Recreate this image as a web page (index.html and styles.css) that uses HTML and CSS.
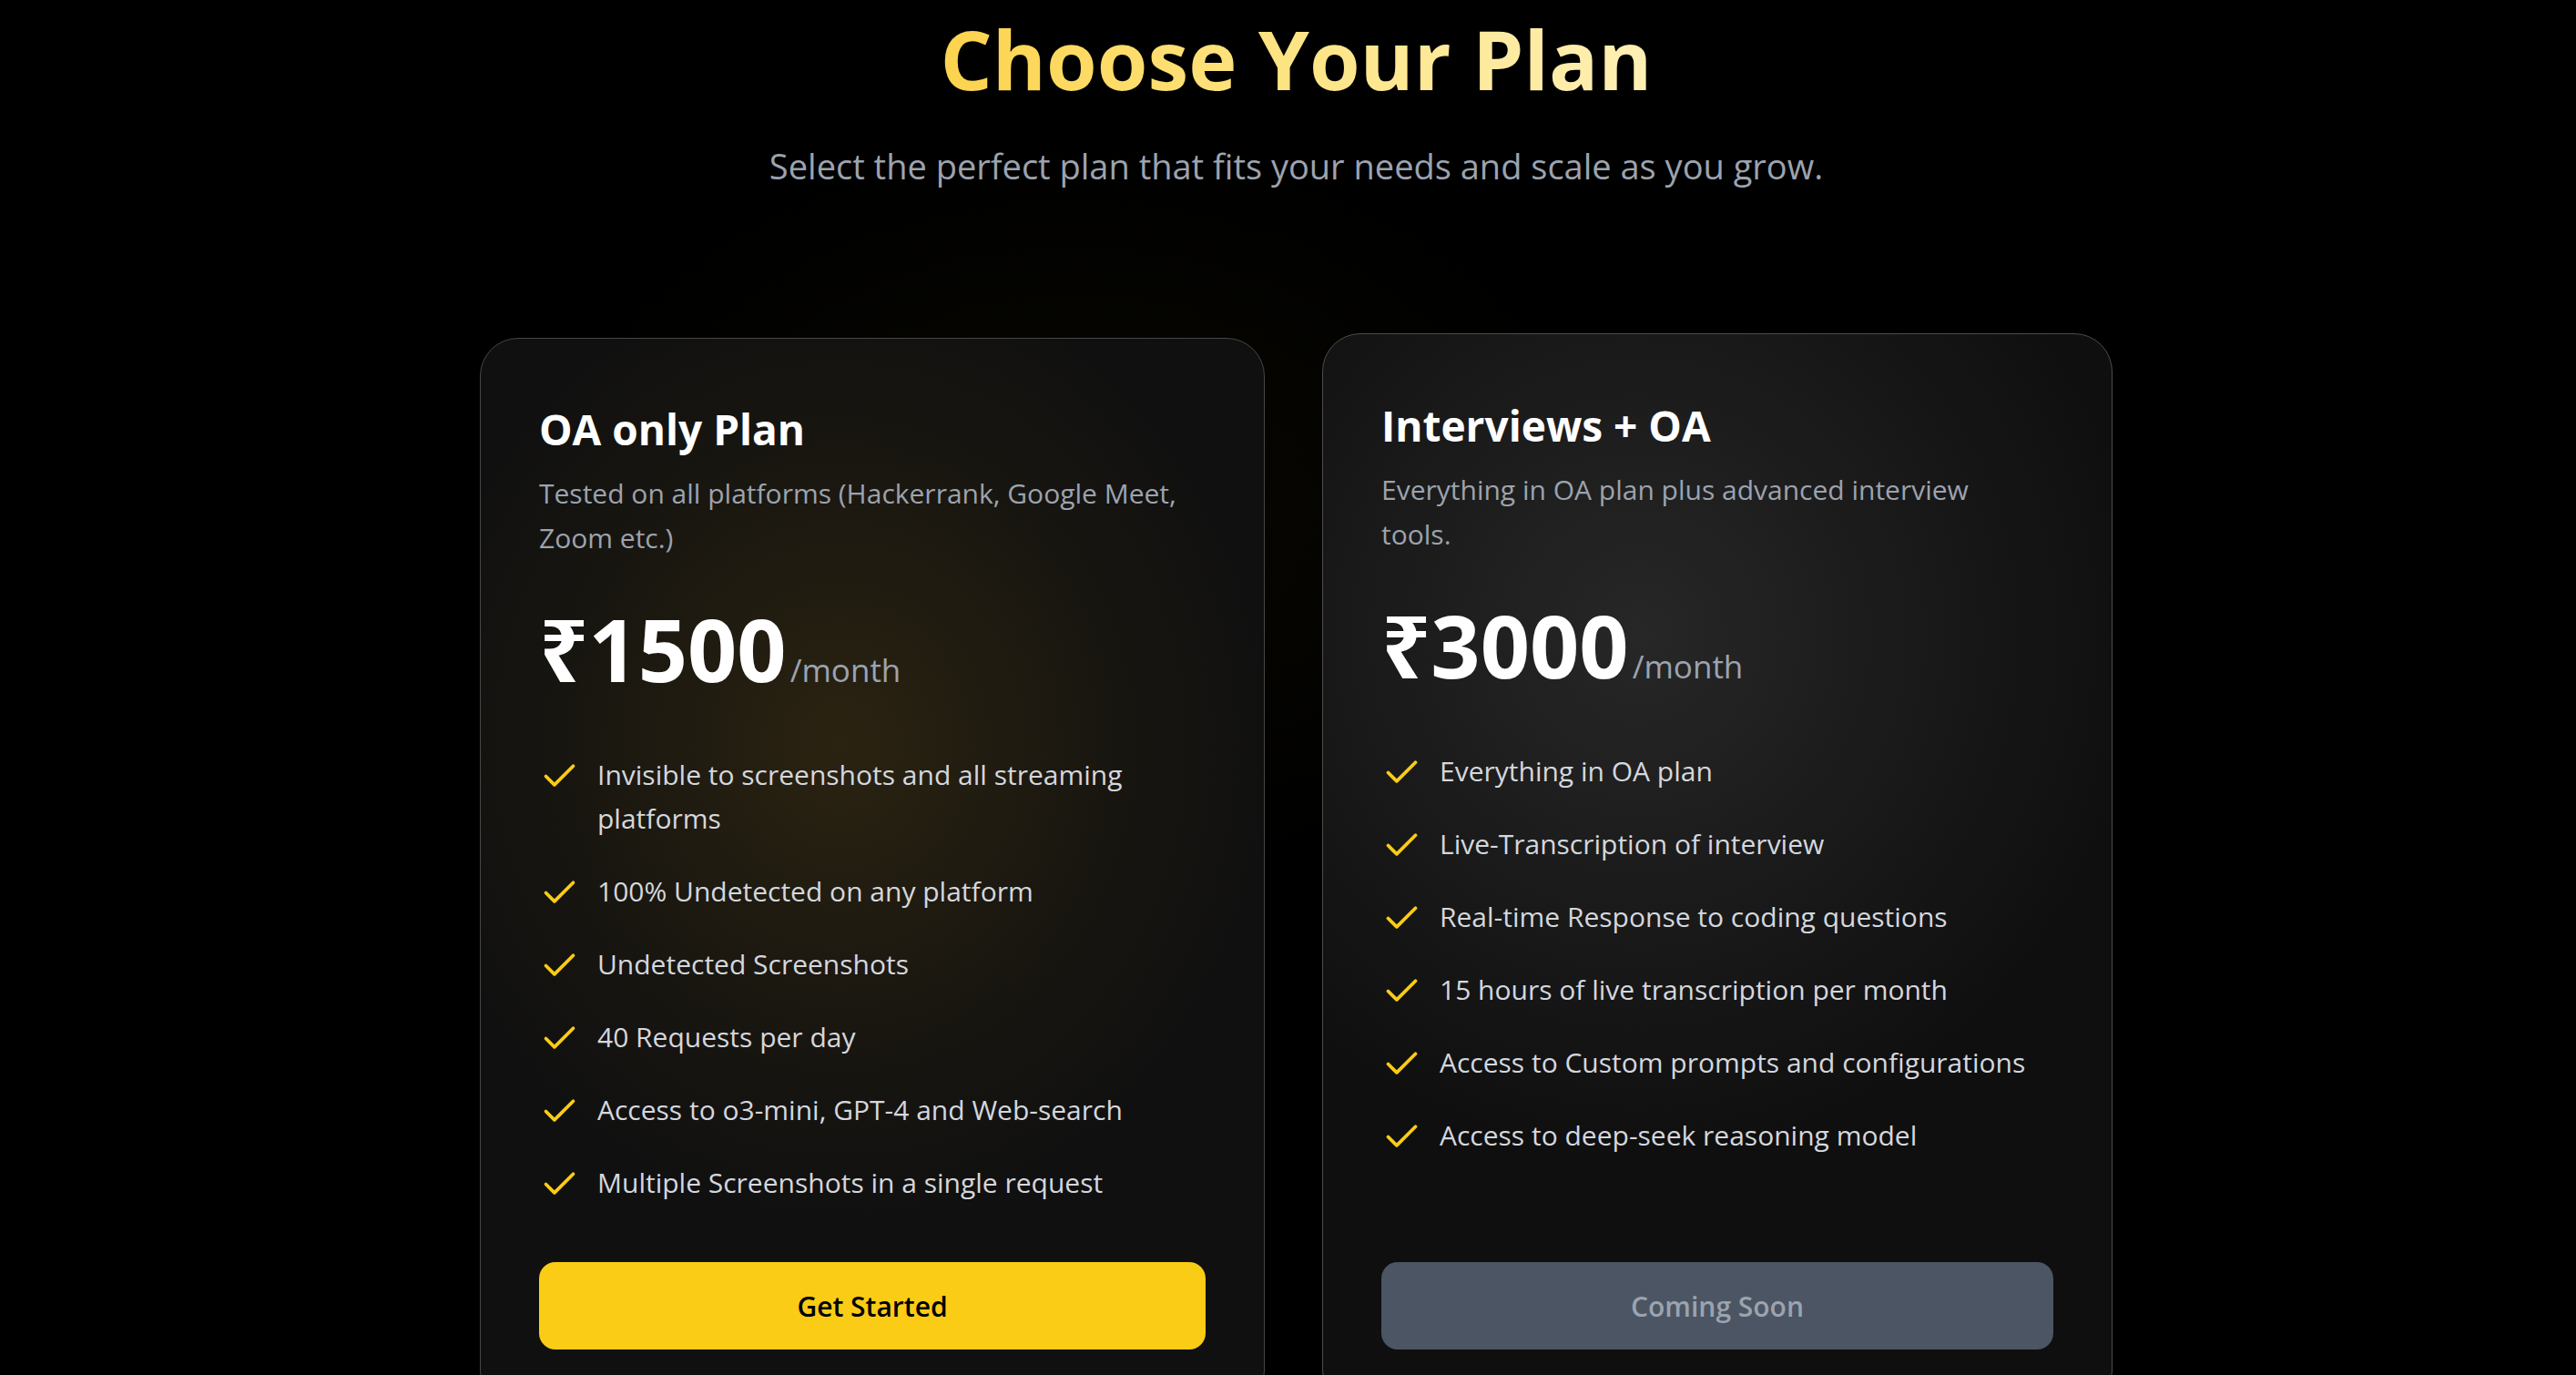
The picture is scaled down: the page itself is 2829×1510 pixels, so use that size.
FILE: index.html
```html
<!DOCTYPE html>
<html lang="en">
<head>
    <meta charset="UTF-8">
    <meta name="viewport" content="width=device-width, initial-scale=1.0">
    <title>Pricing</title>
    <link rel="stylesheet" href="styles.css">
</head>
<body>
    <main class="pricing">
        <header class="pricing-head">
            <h1>Choose Your Plan</h1>
            <p class="subtitle">Select the perfect plan that fits your needs and scale as you grow.</p>
        </header>

        <div class="plans">
            <!-- OA plan -->
            <article class="plan plan--oa">
                <h2 class="plan-name">OA only Plan</h2>
                <p class="plan-desc">Tested on all platforms (Hackerrank, Google Meet, Zoom etc.)</p>
                <div class="price">
                    <span class="amount">₹1500</span>
                    <span class="per">/month</span>
                </div>
                <ul class="features">
                    <li><svg viewBox="0 0 24 24"><path d="M20 6 9 17l-5-5"/></svg><span>Invisible to screenshots and all streaming platforms</span></li>
                    <li><svg viewBox="0 0 24 24"><path d="M20 6 9 17l-5-5"/></svg><span>100% Undetected on any platform</span></li>
                    <li><svg viewBox="0 0 24 24"><path d="M20 6 9 17l-5-5"/></svg><span>Undetected Screenshots</span></li>
                    <li><svg viewBox="0 0 24 24"><path d="M20 6 9 17l-5-5"/></svg><span>40 Requests per day</span></li>
                    <li><svg viewBox="0 0 24 24"><path d="M20 6 9 17l-5-5"/></svg><span>Access to o3-mini, GPT-4 and Web-search</span></li>
                    <li><svg viewBox="0 0 24 24"><path d="M20 6 9 17l-5-5"/></svg><span>Multiple Screenshots in a single request</span></li>
                </ul>
                <button class="plan-btn plan-btn--primary">Get Started</button>
            </article>

            <!-- Interviews plan -->
            <article class="plan plan--pro">
                <h2 class="plan-name">Interviews + OA</h2>
                <p class="plan-desc">Everything in OA plan plus advanced interview tools.</p>
                <div class="price">
                    <span class="amount">₹3000</span>
                    <span class="per">/month</span>
                </div>
                <ul class="features">
                    <li><svg viewBox="0 0 24 24"><path d="M20 6 9 17l-5-5"/></svg><span>Everything in OA plan</span></li>
                    <li><svg viewBox="0 0 24 24"><path d="M20 6 9 17l-5-5"/></svg><span>Live-Transcription of interview</span></li>
                    <li><svg viewBox="0 0 24 24"><path d="M20 6 9 17l-5-5"/></svg><span>Real-time Response to coding questions</span></li>
                    <li><svg viewBox="0 0 24 24"><path d="M20 6 9 17l-5-5"/></svg><span>15 hours of live transcription per month</span></li>
                    <li><svg viewBox="0 0 24 24"><path d="M20 6 9 17l-5-5"/></svg><span>Access to Custom prompts and configurations</span></li>
                    <li><svg viewBox="0 0 24 24"><path d="M20 6 9 17l-5-5"/></svg><span>Access to deep-seek reasoning model</span></li>
                </ul>
                <button class="plan-btn plan-btn--disabled" disabled>Coming Soon</button>
            </article>
        </div>
    </main>
</body>
</html>
```

FILE: styles.css
```css
/* General */
html {
    overflow: hidden;
}

body {
    margin: 0;
    font-family: 'Open Sans', 'Noto Sans', 'DejaVu Sans', sans-serif;
    color: #fff;
    background:
        radial-gradient(900px 620px at 1180px 560px, rgba(250, 204, 21, 0.035), transparent 70%),
        #000;
    min-height: 100vh;
}

.pricing {
    padding: 12px 0 0 18px;
    text-align: center;
}

/* Heading */
.pricing-head h1 {
    display: inline-block;
    margin: 0;
    font-size: 90px;
    line-height: 105px;
    font-weight: 700;
    background: linear-gradient(90deg, #fcd34d 0%, #fde68a 55%, #feefb5 100%);
    -webkit-background-clip: text;
    background-clip: text;
    color: transparent;
}

.subtitle {
    margin: 37px 0 0;
    font-size: 38px;
    line-height: 57px;
    color: #9ca3af;
}

/* Cards */
.plans {
    display: flex;
    justify-content: center;
    align-items: stretch;
    gap: 63px;
    margin-top: 160px;
    text-align: left;
}

.plan {
    box-sizing: border-box;
    width: 862px;
    padding: 71px 64px 64px;
    border: 1px solid #464646;
    border-radius: 42px;
    display: flex;
    flex-direction: column;
}

.plan--oa {
    background:
        radial-gradient(560px 620px at 46% 38%, rgba(120, 90, 20, 0.26), rgba(90, 68, 16, 0.1) 55%, transparent 85%),
        #101010;
}

.plan--pro {
    width: 868px;
    margin-top: -5px;
    padding-top: 72px;
    border-color: #4c4c4c;
    background:
        radial-gradient(620px 640px at 40% 28%, #272727, #181818 55%, #0f0f0f 90%),
        #0f0f0f;
}

.plan-name {
    margin: 0;
    font-size: 46px;
    line-height: 56px;
    font-weight: 700;
    color: #fff;
}

.plan-desc {
    margin: 18px 0 0;
    max-width: 712px;
    font-size: 30px;
    line-height: 49px;
    color: #9ca3af;
}

.price {
    display: flex;
    align-items: baseline;
    margin-top: 50px;
}

.amount {
    font-size: 95px;
    line-height: 95px;
    font-weight: 700;
    color: #fff;
}

.per {
    margin-left: 4px;
    font-size: 35px;
    line-height: 35px;
    color: #9ca3af;
}

/* Feature list */
.features {
    list-style: none;
    margin: 67px 0 63px;
    padding: 0;
    display: flex;
    flex-direction: column;
    gap: 32px;
}

.features li {
    display: flex;
    align-items: flex-start;
    gap: 19px;
    font-size: 30px;
    line-height: 48px;
    color: #d4d7de;
}

.features svg {
    flex-shrink: 0;
    width: 45px;
    height: 45px;
    margin-top: 3px;
    fill: none;
    stroke: #facc15;
    stroke-width: 2;
    stroke-linecap: round;
    stroke-linejoin: round;
}

/* Buttons */
.plan-btn {
    margin-top: auto;
    width: 100%;
    height: 96px;
    border: none;
    border-radius: 18px;
    font-family: inherit;
    font-size: 30px;
    font-weight: 600;
    cursor: pointer;
}

.plan-btn--primary {
    background-color: #facc15;
    color: #000;
}

.plan-btn--disabled {
    background-color: #4b5563;
    color: #9ca3af;
    cursor: not-allowed;
}
```
